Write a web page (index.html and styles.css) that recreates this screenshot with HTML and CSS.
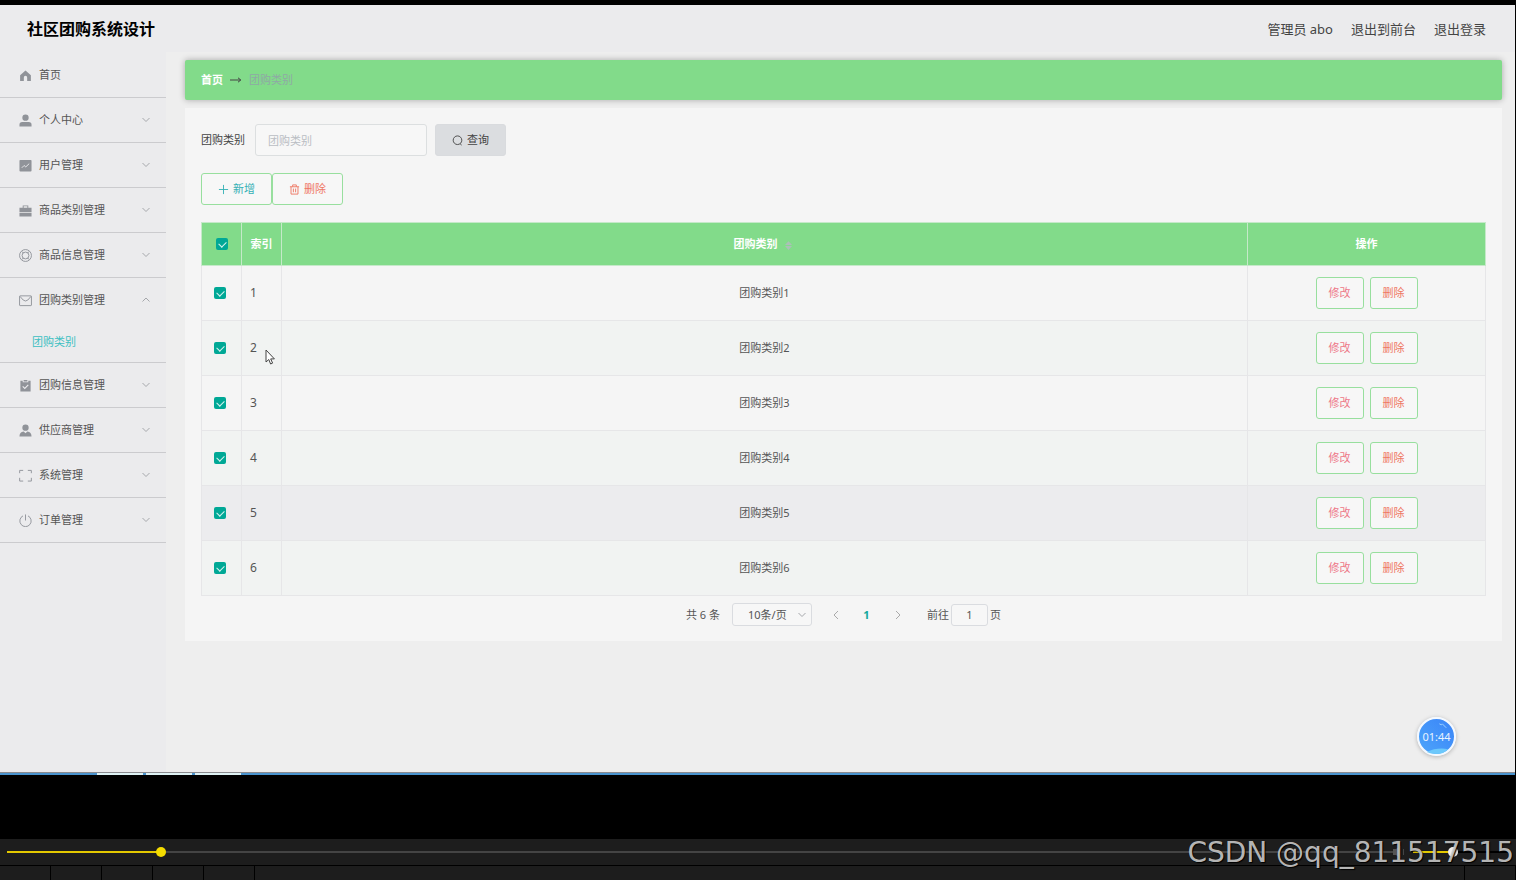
FILE: index.html
```html
<!DOCTYPE html>
<html lang="zh-CN">

<head>
    <meta charset="UTF-8">
    <meta name="viewport" content="width=device-width, initial-scale=1.0">
    <title>社区团购系统设计</title>
    <link rel="stylesheet" href="styles.css">
</head>

<body>
    <div class="screen">
        <header>
            <h1>社区团购系统设计</h1>
            <div class="user-links">
                <span>管理员 abo</span>
                <a href="#">退出到前台</a>
                <a href="#">退出登录</a>
            </div>
        </header>

        <div class="layout">
            <nav>
                <ul class="menu">
                    <li><a href="#">
                        <svg class="icon" viewBox="0 0 14 14"><path fill="currentColor" d="M7 1.5 1.2 6.6V13h4V9.2a1.8 1.8 0 0 1 3.6 0V13h4V6.6z"/></svg>首页</a></li>
                    <li><a href="#">
                        <svg class="icon" viewBox="0 0 14 14"><circle cx="7" cy="4" r="3.4" fill="currentColor"/><path fill="currentColor" d="M.5 13.500v-2Q.5 8.600 3.500 8.600h7q3 0 3 2.900v2z"/></svg>个人中心
                        <svg class="arrow" viewBox="0 0 8 8"><path d="M.5 2 4 5.5 7.500 2"/></svg></a></li>
                    <li><a href="#">
                        <svg class="icon" viewBox="0 0 14 14"><rect x=".5" y="1" width="13" height="12.500" rx="1" fill="currentColor"/><path d="M3 9.500 5.500 7l1.800 1.500L11 5" fill="none" stroke="#ebebed"/></svg>用户管理
                        <svg class="arrow" viewBox="0 0 8 8"><path d="M.5 2 4 5.500 7.500 2"/></svg></a></li>
                    <li><a href="#">
                        <svg class="icon" viewBox="0 0 14 14"><path fill="currentColor" d="M4 4V1.500h6V4h3.500v4.500H.5V4zm1-1.500V4h4V2.500zM.5 9.500h13v4H.5z"/></svg>商品类别管理
                        <svg class="arrow" viewBox="0 0 8 8"><path d="M.5 2 4 5.500 7.500 2"/></svg></a></li>
                    <li><a href="#">
                        <svg class="icon line" viewBox="0 0 14 14"><circle cx="7" cy="7" r="6.400"/><circle cx="7" cy="7" r="3.700"/><path d="M3 2.500 4.800 4.500M11 2.500 9.200 4.500M3 11.500l1.800-2M11 11.500l-1.800-2"/></svg>商品信息管理
                        <svg class="arrow" viewBox="0 0 8 8"><path d="M.5 2 4 5.500 7.500 2"/></svg></a></li>
                    <li><a href="#">
                        <svg class="icon line" viewBox="0 0 14 14"><rect x=".6" y="2" width="12.800" height="10.500" rx=".6"/><path d="M1 2.500 4.500 6.500Q7 8.600 9.500 6.500L13 2.500"/></svg>团购类别管理
                        <svg class="arrow" viewBox="0 0 8 8"><path d="M.5 5.500 4 2l3.500 3.500"/></svg></a>
                        <ul class="submenu">
                            <li><a href="#">团购类别</a></li>
                        </ul>
                    </li>
                    <li><a href="#">
                        <svg class="icon" viewBox="0 0 14 14"><path fill="currentColor" d="M1.500 2H4v1.500h6V2h2.500v11.500h-11zM5 1h4v1.800H5z"/><path d="M4 8l2.200 2.200L10 6.300" fill="none" stroke="#ebebed" stroke-width="1.200"/></svg>团购信息管理
                        <svg class="arrow" viewBox="0 0 8 8"><path d="M.5 2 4 5.500 7.500 2"/></svg></a></li>
                    <li><a href="#">
                        <svg class="icon" viewBox="0 0 14 14"><circle cx="7" cy="4" r="3.400" fill="currentColor"/><path fill="currentColor" d="M.5 13.500q0-5 4.500-5.400L7 10l2-1.900q4.500.4 4.500 5.400z"/></svg>供应商管理
                        <svg class="arrow" viewBox="0 0 8 8"><path d="M.5 2 4 5.500 7.500 2"/></svg></a></li>
                    <li><a href="#">
                        <svg class="icon line" viewBox="0 0 14 14"><path d="M.7 4.500v-3h3.800M9.500 1.500h3.800v3M13.300 9.500v3.500H9.500M4.500 13H.7V9.500"/></svg>系统管理
                        <svg class="arrow" viewBox="0 0 8 8"><path d="M.5 2 4 5.500 7.500 2"/></svg></a></li>
                    <li><a href="#">
                        <svg class="icon line" viewBox="0 0 14 14"><path d="M4.300 2a6.100 6.100 0 1 0 5.400 0M7 .5v6.500"/></svg>订单管理
                        <svg class="arrow" viewBox="0 0 8 8"><path d="M.5 2 4 5.500 7.500 2"/></svg></a></li>
                </ul>
            </nav>

            <main>
                <div class="breadcrumb">
                    <a href="#">首页</a>
                    <svg class="crumb-arrow" viewBox="0 0 12 8"><path d="M0 4h10.500M8 1.800 10.800 4 8 6.200"/></svg>
                    <span>团购类别</span>
                </div>

                <div class="card">
                    <form class="search">
                        <label for="category">团购类别</label>
                        <input type="text" id="category" placeholder="团购类别">
                        <button type="button" class="btn btn-search">
                            <svg viewBox="0 0 12 12"><circle cx="6" cy="5.700" r="4.700"/><path d="M8.800 9.500 10.500 11"/></svg>查询
                        </button>
                    </form>

                    <div class="actions">
                        <button class="btn btn-add"><svg viewBox="0 0 12 12"><path d="M6 1v10M1 6h10"/></svg>新增</button>
                        <button class="btn btn-delete"><svg viewBox="0 0 12 12"><path d="M1 3h10M4 3V1h4v2M2.200 3v8h7.600V3M4.800 5v4M7.200 5v4"/></svg>删除</button>
                    </div>

                    <table>
                        <thead>
                            <tr>
                                <th class="col-check"><input type="checkbox" aria-label="全选" checked></th>
                                <th class="col-index">索引</th>
                                <th>团购类别<svg class="sort" viewBox="0 0 8 10"><path d="M4 0 8 4.500H0zM4 10 0 5.500h8z"/></svg></th>
                                <th class="col-ops">操作</th>
                            </tr>
                        </thead>
                        <tbody>
                            <tr>
                                <td class="col-check"><input type="checkbox" aria-label="选择 1" checked></td>
                                <td class="col-index">1</td>
                                <td>团购类别1</td>
                                <td class="col-ops"><button class="btn btn-edit">修改</button><button class="btn btn-remove">删除</button></td>
                            </tr>
                            <tr>
                                <td class="col-check"><input type="checkbox" aria-label="选择 2" checked></td>
                                <td class="col-index">2<svg class="cursor" viewBox="0 0 11 16"><path d="M1 1v12l2.800-2.500L5.600 15l2-.9-1.900-4.200h3.700z" fill="#fff" stroke="#444"/></svg></td>
                                <td>团购类别2</td>
                                <td class="col-ops"><button class="btn btn-edit">修改</button><button class="btn btn-remove">删除</button></td>
                            </tr>
                            <tr>
                                <td class="col-check"><input type="checkbox" aria-label="选择 3" checked></td>
                                <td class="col-index">3</td>
                                <td>团购类别3</td>
                                <td class="col-ops"><button class="btn btn-edit">修改</button><button class="btn btn-remove">删除</button></td>
                            </tr>
                            <tr>
                                <td class="col-check"><input type="checkbox" aria-label="选择 4" checked></td>
                                <td class="col-index">4</td>
                                <td>团购类别4</td>
                                <td class="col-ops"><button class="btn btn-edit">修改</button><button class="btn btn-remove">删除</button></td>
                            </tr>
                            <tr class="active">
                                <td class="col-check"><input type="checkbox" aria-label="选择 5" checked></td>
                                <td class="col-index">5</td>
                                <td>团购类别5</td>
                                <td class="col-ops"><button class="btn btn-edit">修改</button><button class="btn btn-remove">删除</button></td>
                            </tr>
                            <tr>
                                <td class="col-check"><input type="checkbox" aria-label="选择 6" checked></td>
                                <td class="col-index">6</td>
                                <td>团购类别6</td>
                                <td class="col-ops"><button class="btn btn-edit">修改</button><button class="btn btn-remove">删除</button></td>
                            </tr>
                        </tbody>
                    </table>

                    <div class="pagination">
                        <span>共 6 条</span>
                        <div class="page-size">
                            <select aria-label="每页条数">
                                <option>10条/页</option>
                            </select>
                            <svg class="arrow" viewBox="0 0 8 8"><path d="M.5 2 4 5.500 7.500 2"/></svg>
                        </div>
                        <div class="pager">
                            <button aria-label="上一页"><svg viewBox="0 0 8 10"><path d="M6 1 2 5l4 4"/></svg></button>
                            <button class="current">1</button>
                            <button aria-label="下一页"><svg viewBox="0 0 8 10"><path d="M2 1l4 4-4 4"/></svg></button>
                        </div>
                        <label class="jump">前往<input type="text" value="1">页</label>
                    </div>
                </div>
            </main>
        </div>

        <div class="timer">
            <svg viewBox="0 0 36 36"><path d="M8 34q10-5 22-3-5 5-12 5-6 0-10-2z" fill="#6cc8fb"/><path d="M21 5l2 1 1-1 4 4" fill="none" stroke="#9fd2ff"/></svg>
            <span>01:44</span>
        </div>

        <div class="taskbar"><i></i><i></i><i></i></div>
    </div>

    <div class="player">
        <div class="controls">
            <input type="range" class="progress" aria-label="播放进度" min="0" max="1000" value="108">
            <svg class="speaker" viewBox="0 0 14 14"><path fill="#555" d="M0 4h3l5-3.500v13L3 10H0z"/><path d="M10.500 4v6" stroke="#444"/></svg>
            <input type="range" class="volume" aria-label="音量" min="0" max="100" value="41">
        </div>
        <div class="toolbar"><i></i><i></i><i></i><i></i><i></i><i class="rest"></i><i></i></div>
        <div class="watermark">CSDN @qq_811517515</div>
    </div>
</body>

</html>
```

FILE: styles.css
```css
* {
    box-sizing: border-box;
}

body {
    display: flex;
    flex-direction: column;
    min-height: 100vh;
    margin: 0;
    background-color: #000;
    color: #555;
    font-family: "Noto Sans", "Noto Sans CJK SC", sans-serif;
    font-size: 11px;
    line-height: 16px;
}

a {
    color: inherit;
    text-decoration: none;
}

button,
input,
select {
    font: inherit;
    color: inherit;
}

ul {
    list-style: none;
    margin: 0;
    padding: 0;
}

.screen {
    position: relative;
    flex: 1;
    display: flex;
    flex-direction: column;
    margin: 5px 1px 64px 0;
    background-color: #eee;
}

header {
    display: flex;
    justify-content: space-between;
    align-items: center;
    height: 47px;
    padding: 0 29px 0 27px;
    background-color: #ebebed;
}

header h1 {
    margin: 0;
    font-size: 16px;
    line-height: 24px;
    color: #000;
}

.user-links {
    display: flex;
    gap: 18px;
    font-size: 13px;
    color: #444;
}

.layout {
    flex: 1;
    display: flex;
}

/* Sidebar */
nav {
    width: 166px;
    padding-top: 1px;
    background-color: #ebebed;
}

.menu > li {
    border-bottom: 1px solid #cbcbce;
}

.menu > li > a {
    display: flex;
    align-items: center;
    gap: 7px;
    height: 44px;
    padding: 0 16px 0 19px;
}

.icon {
    width: 13px;
    height: 13px;
    color: #909399;
}

.line {
    fill: none;
    stroke: currentColor;
}

.arrow {
    width: 8px;
    height: 8px;
    margin-left: auto;
    fill: none;
    stroke: #a5a7ab;
}

.submenu a {
    display: flex;
    align-items: center;
    height: 40px;
    padding-left: 32px;
    color: #3cbfc2;
}

/* Content */
main {
    flex: 1;
    padding: 8px 13px 0 19px;
}

.breadcrumb {
    display: flex;
    align-items: center;
    gap: 7px;
    height: 40px;
    margin-bottom: 8px;
    padding: 0 16px;
    border-radius: 2px;
    background-color: #82db8a;
    box-shadow: 0 0 6px rgba(0, 0, 0, 0.3);
    color: #8fa9a5;
}

.breadcrumb a {
    color: #fff;
    font-weight: bold;
}

.crumb-arrow {
    width: 12px;
    height: 8px;
    fill: none;
    stroke: #444;
}

.card {
    padding: 16px 16px 15px;
    background-color: #f5f5f5;
}

.search {
    display: flex;
    align-items: center;
    margin-bottom: 17px;
    color: #444;
}

.search input {
    width: 172px;
    height: 32px;
    margin: 0 8px 0 10px;
    padding: 0 12px;
    border: 1px solid #dcdfe0;
    border-radius: 3px;
    background-color: #f7f7f7;
}

.search input::placeholder {
    color: #babdc3;
}

.btn {
    height: 32px;
    padding: 0 12px;
    border: 1px solid #98df9e;
    border-radius: 3px;
    background-color: #f7f7f7;
    cursor: pointer;
}

.btn svg {
    width: 11px;
    height: 11px;
    fill: none;
    stroke: currentColor;
}

.btn-search,
.btn-add,
.btn-delete {
    display: flex;
    justify-content: center;
    align-items: center;
    gap: 4px;
    width: 71px;
}

.btn-search {
    border-color: #d9dbde;
    background-color: #dbdde0;
}

.btn-add {
    color: #35b0b5;
}

.btn-delete,
.btn-remove {
    color: #ef7663;
}

.btn-edit {
    color: #ee7888;
}

.actions {
    display: flex;
    margin-bottom: 17px;
}

/* Table */
table {
    width: 100%;
    table-layout: fixed;
    border-collapse: collapse;
    text-align: center;
}

th,
td {
    position: relative;
    padding: 0;
    border: 1px solid #e6e6e8;
}

th {
    height: 43px;
    border-color: #c5e9c9;
    background-color: #82db8a;
    color: #fff;
}

td {
    height: 55px;
}

tbody tr:nth-child(even) {
    background-color: #f1f3f2;
}

tbody tr.active {
    background-color: #ececee;
}

.col-check {
    width: 40px;
}

td.col-check {
    padding-right: 3px;
}

.col-index {
    width: 40px;
}

td.col-index {
    padding-left: 8px;
    font-size: 12px;
    text-align: left;
}

.col-ops {
    width: 238px;
}

.col-ops .btn {
    width: 48px;
    margin: 0 3px;
}

input[type="checkbox"] {
    appearance: none;
    display: block;
    position: relative;
    width: 12px;
    height: 12px;
    margin: 0 auto;
    border-radius: 2px;
    background-color: #00a896;
}

input[type="checkbox"]:checked::after {
    content: "";
    position: absolute;
    top: 2px;
    left: 4px;
    width: 4px;
    height: 6px;
    border: solid #d8f4f0;
    border-width: 0 1px 1px 0;
    transform: rotate(45deg);
}

.sort {
    width: 7px;
    height: 9px;
    margin: 0 4px 0 7px;
    fill: #acbfb8;
    vertical-align: middle;
}

.cursor {
    position: absolute;
    top: 28px;
    left: 23px;
    width: 11px;
    height: 16px;
}

/* Pagination */
.pagination {
    display: flex;
    justify-content: center;
    align-items: center;
    margin-top: 7px;
}

.page-size {
    position: relative;
    margin: 0 12px;
}

.page-size select {
    appearance: none;
    width: 80px;
    height: 23px;
    padding: 0 15px;
    border: 1px solid #dadce0;
    border-radius: 3px;
    background-color: #f7f7f7;
}

.page-size .arrow {
    position: absolute;
    top: 8px;
    right: 6px;
}

.pager {
    display: flex;
    gap: 8px;
    margin-right: 18px;
}

.pager button {
    display: flex;
    justify-content: center;
    align-items: center;
    width: 23px;
    height: 23px;
    padding: 0;
    border: none;
    background: none;
}

.pager svg {
    width: 8px;
    height: 10px;
    fill: none;
    stroke: #aaa;
}

.pager .current {
    color: #12a89c;
    font-weight: bold;
}

.jump {
    display: flex;
    align-items: center;
    gap: 2px;
}

.jump input {
    width: 37px;
    height: 22px;
    border: 1px solid #dadce0;
    border-radius: 3px;
    background-color: #f7f7f7;
    text-align: center;
}

.timer {
    position: absolute;
    right: 59px;
    bottom: 19px;
    display: flex;
    justify-content: center;
    align-items: center;
    width: 39px;
    height: 39px;
    border: 2px solid #f4f9ff;
    border-radius: 50%;
    background: linear-gradient(225deg, #3a84f7, #4da5fb);
    box-shadow: 0 1px 4px rgba(0, 0, 0, 0.25);
    color: #e8f3ff;
}

.timer svg {
    position: absolute;
    width: 35px;
    height: 35px;
}

.timer span {
    position: relative;
}

.taskbar {
    display: flex;
    gap: 3px;
    height: 3px;
    padding-left: 97px;
    border-top: 1px solid #8b8b8f;
    background-color: #4a94cf;
}

.taskbar i {
    width: 46px;
    background-color: #dff3f5;
}

/* Video player */
.player {
    position: relative;
    background-color: #1d1d1d;
}

.controls {
    display: flex;
    align-items: center;
    height: 26px;
    padding: 0 7px;
}

input[type="range"] {
    appearance: none;
    height: 12px;
    margin: 0;
    background: none;
}

.progress {
    flex: 1;
}

.progress::-webkit-slider-runnable-track {
    height: 2px;
    background: linear-gradient(to right, #e3c800 11%, #444 11%);
}

.progress::-webkit-slider-thumb {
    appearance: none;
    width: 10px;
    height: 10px;
    margin-top: -4px;
    border-radius: 50%;
    background-color: #f5dc00;
}

.speaker {
    width: 14px;
    height: 14px;
    margin: 0 6px 0 0;
}

.volume {
    width: 96px;
}

.volume::-webkit-slider-runnable-track {
    height: 2px;
    background: linear-gradient(to right, #e3c800 41%, #000 41%);
}

.volume::-webkit-slider-thumb {
    appearance: none;
    width: 10px;
    height: 10px;
    margin-top: -4px;
    border-radius: 50%;
    background-color: #eee;
}

.toolbar {
    display: flex;
    height: 15px;
    border-top: 1px solid #000;
}

.toolbar i {
    width: 51px;
    border-right: 1px solid #000;
}

.toolbar .rest {
    flex: 1;
}

.watermark {
    position: absolute;
    right: 2px;
    bottom: 10px;
    color: rgba(205, 205, 205, 0.9);
    font-family: "DejaVu Sans", sans-serif;
    font-size: 28px;
    line-height: 34px;
    text-shadow: 1px 1px 1px #000;
}
```
